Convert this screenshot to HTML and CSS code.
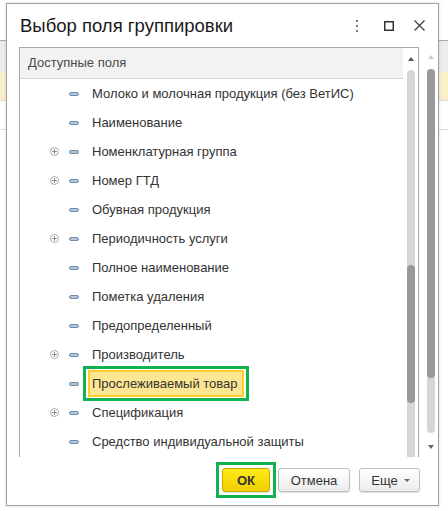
FILE: index.html
```html
<!DOCTYPE html>
<html lang="ru">
<head>
<meta charset="utf-8">
<title>Выбор поля группировки</title>
<link rel="stylesheet" href="styles.css">
</head>
<body>
<div class="page">
  <div class="page-top"></div>
  <div class="page-toolbar"></div>
  <div class="page-row page-row-current"></div>
  <div class="page-row"></div>
</div>

<div class="dialog">
  <div class="titlebar">
    <h1 class="title">Выбор поля группировки</h1>
    <div class="title-tools">
      <svg class="tool tool-more" width="4" height="12" viewBox="0 0 4 12">
        <rect x="1" y="0" width="2" height="2" fill="#777"/>
        <rect x="1" y="5" width="2" height="2" fill="#777"/>
        <rect x="1" y="10" width="2" height="2" fill="#777"/>
      </svg>
      <svg class="tool tool-max" width="10" height="10" viewBox="0 0 10 10">
        <rect x="0.75" y="0.75" width="8.5" height="8.5" fill="none" stroke="#333" stroke-width="1.5"/>
      </svg>
      <svg class="tool tool-close" width="11" height="11" viewBox="0 0 11 11">
        <path d="M0.5 0.5L10.5 10.5M10.5 0.5L0.5 10.5" stroke="#444" stroke-width="1.3"/>
      </svg>
    </div>
  </div>

  <div class="content">
    <div class="tree">
      <div class="tree-main">
        <div class="tree-head">Доступные поля</div>
        <ul class="tree-rows">
          <li class="row"><span class="exp"></span><span class="field"></span><span class="label">Молоко и молочная продукция (без ВетИС)</span></li>
          <li class="row"><span class="exp"></span><span class="field"></span><span class="label">Наименование</span></li>
          <li class="row"><span class="exp exp-plus"></span><span class="field"></span><span class="label">Номенклатурная группа</span></li>
          <li class="row"><span class="exp exp-plus"></span><span class="field"></span><span class="label">Номер ГТД</span></li>
          <li class="row"><span class="exp"></span><span class="field"></span><span class="label">Обувная продукция</span></li>
          <li class="row"><span class="exp exp-plus"></span><span class="field"></span><span class="label">Периодичность услуги</span></li>
          <li class="row"><span class="exp"></span><span class="field"></span><span class="label">Полное наименование</span></li>
          <li class="row"><span class="exp"></span><span class="field"></span><span class="label">Пометка удаления</span></li>
          <li class="row"><span class="exp"></span><span class="field"></span><span class="label">Предопределенный</span></li>
          <li class="row"><span class="exp exp-plus"></span><span class="field"></span><span class="label">Производитель</span></li>
          <li class="row row-selected"><span class="exp"></span><span class="field"></span><span class="label">Прослеживаемый товар</span></li>
          <li class="row"><span class="exp exp-plus"></span><span class="field"></span><span class="label">Спецификация</span></li>
          <li class="row"><span class="exp"></span><span class="field"></span><span class="label">Средство индивидуальной защиты</span></li>
        </ul>
      </div>
      <div class="vscroll vscroll-inner">
        <div class="arrow arrow-up"></div>
        <div class="track track-inner"><div class="thumb thumb-inner"></div></div>
      </div>
    </div>
    <div class="vscroll vscroll-outer">
      <div class="arrow arrow-up arrow-off"></div>
      <div class="track track-outer"><div class="thumb thumb-outer"></div></div>
      <div class="arrow arrow-down"></div>
    </div>
  </div>

  <div class="buttons">
    <button class="btn btn-ok">ОК</button>
    <button class="btn btn-cancel">Отмена</button>
    <button class="btn btn-more">Еще <span class="caret"></span></button>
  </div>
</div>
</body>
</html>
```

FILE: styles.css
```css
* { box-sizing: border-box; }

html, body {
  margin: 0;
  padding: 0;
  width: 448px;
  height: 511px;
  overflow: hidden;
  background: #fff;
  font-family: "Liberation Sans", Arial, sans-serif;
}

/* underlying form behind the dialog */
.page-top { height: 40px; background: #fff; }
.page-toolbar {
  height: 32px;
  border-top: 1px solid #a9a9a9;
  background: #ececec;
}
.page-row {
  height: 29px;
  border-bottom: 1px solid #dedede;
}
.page-row-current { background: #f9efcb; }

/* dialog window */
.dialog {
  position: absolute;
  left: 6px;
  top: 3px;
  width: 433px;
  border: 1px solid #a3a3a3;
  background: #fff;
  box-shadow: 0 0 3px rgba(0, 0, 0, 0.15);
  display: flex;
  flex-direction: column;
}

.titlebar {
  height: 43px;
  display: flex;
  align-items: center;
  padding-left: 13px;
}
.title {
  margin: 0;
  font-size: 18.5px;
  font-weight: normal;
  color: #1a1a1a;
  flex: 1;
  padding-top: 1px;
}
.title-tools {
  display: flex;
  align-items: center;
  padding-right: 13px;
}
.tool { display: block; }
.tool-max { margin-left: 25px; }
.tool-close { margin-left: 20px; }

/* list area */
.content {
  display: flex;
  padding-left: 12px;
  height: 410px;
}
.tree {
  width: 400px;
  height: 410px;
  border: 1px solid #a7a7a7;
  border-bottom: none;
  display: flex;
  overflow: hidden;
}
.tree-main { width: 383px; }
.tree-head {
  height: 31px;
  background: #f2f2f2;
  border-bottom: 1px solid #d6d6d6;
  padding-left: 8px;
  font-size: 13px;
  line-height: 30px;
  color: #4a4a4a;
}
.tree-rows {
  list-style: none;
  margin: 0;
  padding: 0;
}
.row {
  height: 29px;
  display: flex;
  align-items: center;
  padding-left: 30px;
  font-size: 13px;
  color: #333;
}
.exp {
  width: 9px;
  height: 9px;
  flex: none;
}
.exp-plus {
  border: 1px solid #ababab;
  border-radius: 50%;
  position: relative;
}
.exp-plus::before,
.exp-plus::after {
  content: "";
  position: absolute;
  background: #8c8c8c;
}
.exp-plus::before { left: 1px; top: 3px; width: 5px; height: 1px; }
.exp-plus::after { left: 3px; top: 1px; width: 1px; height: 5px; }

.field {
  width: 10px;
  height: 4px;
  margin-left: 10px;
  flex: none;
  border: 1px solid #6f8cab;
  border-radius: 2px;
  background: #b3c6da;
}
.label {
  margin-left: 9px;
  height: 27px;
  line-height: 23px;
  border: 2px solid transparent;
  padding: 0 4px 0 2px;
  white-space: nowrap;
  position: relative;
}
.row-selected .label {
  background: #fde692;
  border-color: #fbd02d;
}

/* green highlight frame around the marked elements */
.row-selected .label::after,
.btn-ok::after {
  content: "";
  position: absolute;
  border: 3px solid #10b34f;
  pointer-events: none;
}
.row-selected .label::after { inset: -6px -7px; }
.btn-ok::after { inset: -7px; }

/* scrollbars */
.vscroll { display: flex; flex-direction: column; align-items: center; }
.vscroll-inner {
  width: 15px;
  padding-left: 1px;
}
.vscroll-outer {
  width: 8px;
  margin-left: 8px;
}
.arrow {
  width: 0;
  height: 0;
  border-left: 3.5px solid transparent;
  border-right: 3.5px solid transparent;
  flex: none;
}
.arrow-up {
  border-bottom: 4px solid #555;
  margin: 9px 0;
}
.vscroll-outer .arrow-up { margin: 8px 0 10px; }
.arrow-off { border-bottom-color: #c9c9c9; }
.arrow-down {
  border-top: 4px solid #666;
  margin-top: 12px;
}
.track {
  width: 8px;
  background: #d6d6d6;
  border-radius: 4px;
  flex: none;
}
.track-inner { height: 390px; border-radius: 4px 4px 0 0; }
.thumb {
  width: 8px;
  background: #999;
  border-radius: 4px;
}
.thumb-inner { margin-top: 195px; height: 138px; }
.track-outer { height: 364px; }
.thumb-outer { height: 309px; }

/* bottom buttons */
.buttons {
  display: flex;
  justify-content: flex-end;
  padding: 11px 18px 13px 0;
}
.btn {
  height: 24px;
  font-family: "Liberation Sans", Arial, sans-serif;
  font-size: 13px;
  color: #333;
  border: 1px solid #bdbdbd;
  border-radius: 3px;
  background: linear-gradient(#ffffff, #ececec);
  box-shadow: 0 1px 1px rgba(0, 0, 0, 0.12);
  padding: 0;
  display: flex;
  align-items: center;
  justify-content: center;
  position: relative;
}
.btn-ok {
  width: 48px;
  font-weight: bold;
  color: #333;
  background: linear-gradient(#ffec1a, #f0cf00);
  border-color: #c9a800;
}
.btn-cancel { width: 72px; margin-left: 8px; }
.btn-more { width: 61px; margin-left: 9px; padding-left: 2px; }
.caret {
  width: 0;
  height: 0;
  margin-left: 6px;
  margin-top: 1px;
  border-left: 3px solid transparent;
  border-right: 3px solid transparent;
  border-top: 3px solid #666;
}
```
